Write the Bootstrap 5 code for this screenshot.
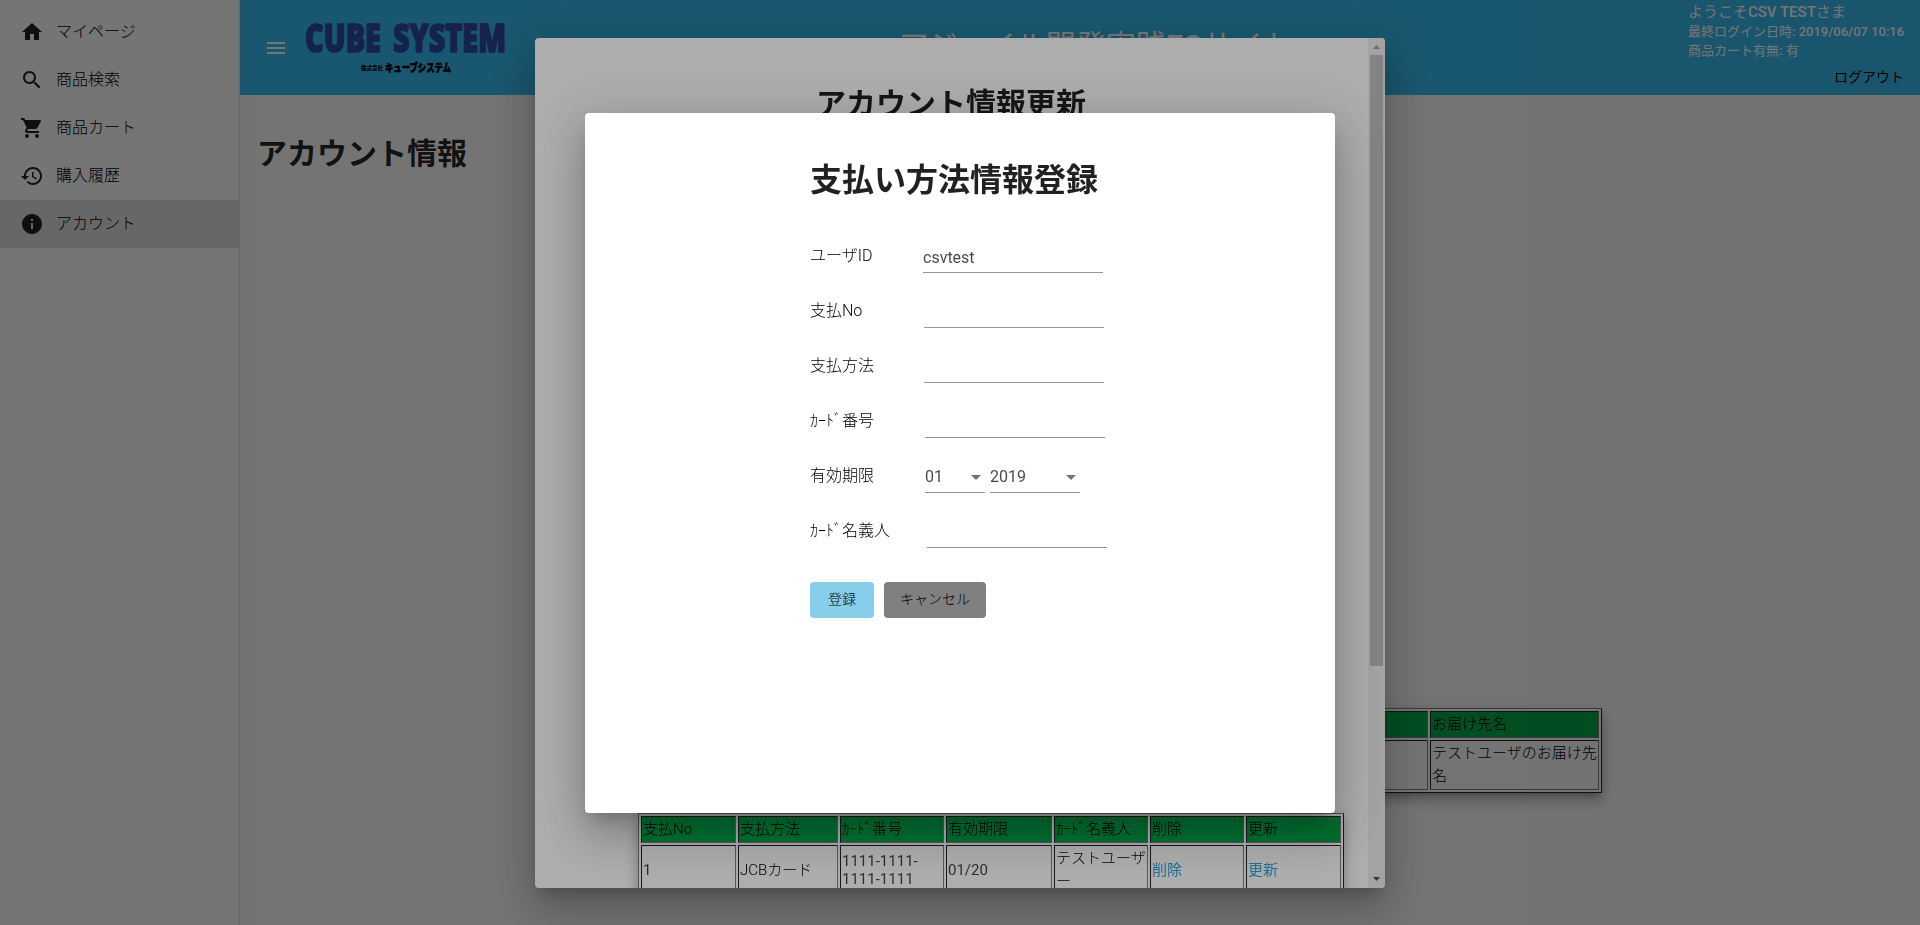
<!DOCTYPE html>
<html lang="ja">
<head>
<meta charset="utf-8">
<meta name="viewport" content="width=device-width, initial-scale=1">
<title>アカウント情報</title>
<link href="https://cdn.jsdelivr.net/npm/bootstrap@5.3.0/dist/css/bootstrap.min.css" rel="stylesheet">
<style>
body{font-family:Roboto,"Noto Sans CJK JP",sans-serif;font-size:16px;line-height:24px;color:rgba(0,0,0,.87);background:#fafafa;height:925px;overflow:hidden}
.drawer{width:240px;height:925px;background:#fff;border-right:1px solid #e0e0e0;padding-top:8px}
.drawer a{height:48px;padding-left:20px;gap:12px;color:#000;font-weight:300;text-decoration:none}
.drawer a.current{background:#e0e0e0}
.drawer svg{width:24px;height:24px;fill:#212121}
.topbar{height:95px;background:#37bbef;color:#fff;padding-right:16px}
.burger{width:24px;height:24px;fill:#fff;margin-left:24px}
.brand-logo{width:204px;height:60px;margin-left:15px;overflow:visible}
.site-title{font-size:30px;font-weight:400;line-height:40px;margin:-4px 4px 0 0;white-space:nowrap}
.site-title b{font-weight:500}
.welcome{width:216px;font-size:13px;line-height:19px;font-weight:500;white-space:nowrap;padding-top:2px}
.welcome .who{font-size:15px;line-height:20px}
.welcome .thin{font-weight:400}
.logout{font-size:14px;color:#000;font-weight:400;line-height:20px;margin-top:7px}
.headline{font-weight:700;color:rgba(0,0,0,.87);font-size:30px;line-height:40px;margin:0}
.page-head{padding:39px 0 0 17px}
.grid-table{border-collapse:separate;border-spacing:2px;border:1px solid;border-color:#808080 #262626 #262626 #808080;font-size:15px;line-height:23px;font-weight:300;table-layout:fixed;color:#000;box-shadow:0 5px 5px -3px rgba(0,0,0,.2),0 8px 10px 1px rgba(0,0,0,.14),0 3px 14px 2px rgba(0,0,0,.12)}
.grid-table td,.grid-table th{border:1px solid;border-color:#262626 #808080 #808080 #262626;padding:1px;font-weight:300;vertical-align:middle;white-space:nowrap}
.grid-table th{background:#00a84b;height:27px}
.grid-table td{height:50px}
.grid-table .num{font-weight:400;line-height:18px;display:block;color:rgba(0,0,0,.75)}
.grid-table a{color:#2fa9dc;font-weight:400;text-decoration:none}
.address{width:1044px;margin:534px 0 0 318px}
.veil{position:fixed;inset:0;background:rgba(0,0,0,.32)}
.sheet{border-radius:4px;background:#fff;overflow:hidden;box-shadow:0 11px 15px -7px rgba(0,0,0,.2),0 24px 38px 3px rgba(0,0,0,.14),0 9px 46px 8px rgba(0,0,0,.12)}
.sheet-update{width:850px;height:850px;margin-top:38px}
.sheet-payment{width:750px;height:700px;margin-top:113px;padding:47px 0 0 225px}
.sheet-update .headline{padding:46px 0 0 281px}
.pay{width:706px;margin:689px 0 0 103px}
.track{width:17px;background:#f1f1f1}
.track .thumb{width:13px;height:611px;background:#c1c1c1}
.track svg{width:17px;height:17px}
.sheet-payment .headline{font-size:32px}
.entries{padding-top:33px}
.entry{height:55px;font-weight:300;color:#000}
.entry .caption{padding-top:11px}
.entry .field{height:33px;width:180px;border:0;border-bottom:1px solid #949494;border-radius:0;padding:4px 0 2px;font:400 16px/24px Roboto,"Noto Sans CJK JP",sans-serif;color:rgba(0,0,0,.72);outline:0;background:transparent;margin-top:7px}
.entry .pick{display:flex;justify-content:space-between;align-items:center;padding-right:4px}
.pick svg{width:10px;height:5px;fill:#737373}
.act{height:36px;border-radius:4px;font-size:14px;font-weight:300;border:0;padding:0 0 2px;color:#000}
</style>
</head>
<body>
<div class="d-flex">
  <nav class="drawer flex-shrink-0">
    <a class="d-flex align-items-center" href="#"><svg viewBox="0 0 24 24"><path d="M10 20v-6h4v6h5v-8h3L12 3 2 12h3v8z"/></svg><span>マイページ</span></a>
    <a class="d-flex align-items-center" href="#"><svg viewBox="0 0 24 24"><path d="M15.5 14h-.79l-.28-.27C15.41 12.59 16 11.11 16 9.5 16 5.91 13.09 3 9.5 3S3 5.91 3 9.5 5.91 16 9.5 16c1.61 0 3.09-.59 4.23-1.57l.27.28v.79l5 4.99L20.49 19l-4.99-5zm-6 0C7.01 14 5 11.99 5 9.5S7.01 5 9.5 5 14 7.01 14 9.5 11.99 14 9.5 14z"/></svg><span>商品検索</span></a>
    <a class="d-flex align-items-center" href="#"><svg viewBox="0 0 24 24"><path d="M7 18c-1.1 0-1.99.9-1.99 2S5.9 22 7 22s2-.9 2-2-.9-2-2-2zM1 2v2h2l3.6 7.59-1.35 2.45c-.16.28-.25.61-.25.96 0 1.1.9 2 2 2h12v-2H7.42c-.14 0-.25-.11-.25-.25l.03-.12.9-1.63h7.45c.75 0 1.41-.41 1.75-1.03l3.58-6.49c.08-.14.12-.31.12-.48 0-.55-.45-1-1-1H5.21l-.94-2H1zm16 16c-1.1 0-1.99.9-1.99 2s.89 2 1.99 2 2-.9 2-2-.9-2-2-2z"/></svg><span>商品カート</span></a>
    <a class="d-flex align-items-center" href="#"><svg viewBox="0 0 24 24"><path d="M13 3c-4.97 0-9 4.03-9 9H1l3.89 3.89.07.14L9 12H6c0-3.87 3.13-7 7-7s7 3.13 7 7-3.13 7-7 7c-1.93 0-3.68-.79-4.94-2.06l-1.42 1.42C8.27 19.99 10.51 21 13 21c4.97 0 9-4.03 9-9s-4.03-9-9-9zm-1 5v5l4.28 2.54.72-1.21-3.5-2.08V8H12z"/></svg><span>購入履歴</span></a>
    <a class="d-flex align-items-center current" href="#"><svg viewBox="0 0 24 24"><path d="M12 2C6.48 2 2 6.48 2 12s4.48 10 10 10 10-4.48 10-10S17.52 2 12 2zm1 15h-2v-6h2v6zm0-8h-2V7h2v2z"/></svg><span>アカウント</span></a>
  </nav>
  <div class="flex-grow-1">
    <header class="topbar d-flex align-items-center justify-content-between">
      <div class="d-flex align-items-center">
        <svg class="burger" viewBox="0 0 24 24"><path d="M3 18h18v-2H3v2zm0-5h18v-2H3v2zm0-7v2h18V6H3z"/></svg>
        <svg class="brand-logo" viewBox="0 0 204 60">
          <g fill="#304aa8" stroke="#304aa8" stroke-width="1.6" font-family="'Open Sans',sans-serif" font-weight="800" font-size="38">
            <text x="2" y="34" textLength="76" lengthAdjust="spacingAndGlyphs">CUBE</text>
            <text x="90" y="34" textLength="113" lengthAdjust="spacingAndGlyphs">SYSTEM</text>
          </g>
          <g fill="#000" stroke="#000" font-family="'Noto Sans CJK JP',sans-serif" font-weight="900">
            <text x="58" y="52" font-size="6" stroke-width="0" textLength="22" lengthAdjust="spacingAndGlyphs">株式会社</text>
            <text x="82" y="54" font-size="11" stroke-width=".5" textLength="66" lengthAdjust="spacingAndGlyphs">キューブシステム</text>
          </g>
        </svg>
      </div>
      <div class="site-title">アジャイル開発実践<b>EC</b>サイト</div>
      <div class="welcome align-self-start">
        <div class="who"><span class="thin">ようこそ</span>CSV TEST<span class="thin">さま</span></div>
        <div><span class="thin">最終ログイン日時</span>: 2019/06/07 10:16</div>
        <div><span class="thin">商品カート有無</span>: <span class="thin">有</span></div>
        <div class="logout text-end">ログアウト</div>
      </div>
    </header>
    <main>
      <h1 class="headline page-head">アカウント情報</h1>
      <table class="grid-table address">
        <colgroup><col><col style="width:169px"></colgroup>
        <tr><th></th><th>お届け先名</th></tr>
        <tr><td></td><td>テストユーザのお届け先<br>名</td></tr>
      </table>
    </main>
  </div>
</div>

<div class="veil d-flex justify-content-center align-items-start">
  <section class="sheet sheet-update d-flex">
    <div class="flex-grow-1 overflow-hidden">
      <h2 class="headline">アカウント情報更新</h2>
      <table class="grid-table pay">
        <colgroup><col style="width:95px"><col style="width:100px"><col style="width:104px"><col style="width:106px"><col style="width:94px"><col style="width:94px"><col style="width:95px"></colgroup>
        <tr><th>支払No</th><th>支払方法</th><th>ｶｰﾄﾞ番号</th><th>有効期限</th><th>ｶｰﾄﾞ名義人</th><th>削除</th><th>更新</th></tr>
        <tr><td><span class="num">1</span></td><td>JCBカード</td><td><span class="num">1111-1111-<br>1111-1111</span></td><td><span class="num">01/20</span></td><td>テストユーザ<br>ー</td><td><a href="#">削除</a></td><td><a href="#">更新</a></td></tr>
      </table>
    </div>
    <div class="track d-flex flex-column align-items-center flex-shrink-0">
      <svg viewBox="0 0 17 17"><path d="M5 11h7L8.500 7z" fill="#a3a3a3"/></svg>
      <div class="thumb"></div>
      <svg class="mt-auto" viewBox="0 0 17 17"><path d="M5 6h7l-3.500 4z" fill="#505050"/></svg>
    </div>
  </section>
</div>

<div class="veil d-flex justify-content-center align-items-start">
  <section class="sheet sheet-payment">
    <h2 class="headline">支払い方法情報登録</h2>
    <form class="entries">
      <div class="entry d-flex"><div class="caption" style="width:113px">ユーザID</div><input class="field" value="csvtest"></div>
      <div class="entry d-flex"><div class="caption" style="width:114px">支払No</div><input class="field"></div>
      <div class="entry d-flex"><div class="caption" style="width:114px">支払方法</div><input class="field"></div>
      <div class="entry d-flex"><div class="caption" style="width:115px">ｶｰﾄﾞ番号</div><input class="field"></div>
      <div class="entry d-flex"><div class="caption" style="width:115px">有効期限</div>
        <div class="field pick" style="width:60px">01<svg viewBox="0 0 10 5"><path d="M0 0h10L5 5z"/></svg></div>
        <div class="field pick" style="width:90px;margin-left:5px">2019<svg viewBox="0 0 10 5"><path d="M0 0h10L5 5z"/></svg></div>
      </div>
      <div class="entry d-flex"><div class="caption" style="width:117px">ｶｰﾄﾞ名義人</div><input class="field"></div>
      <div class="d-flex" style="padding-top:19px">
        <button type="button" class="act" style="width:64px;background:#87ceeb">登録</button>
        <button type="button" class="act" style="width:102px;margin-left:10px;background:#808080">キャンセル</button>
      </div>
    </form>
  </section>
</div>
<script src="https://cdn.jsdelivr.net/npm/bootstrap@5.3.0/dist/js/bootstrap.bundle.min.js"></script>
</body>
</html>
